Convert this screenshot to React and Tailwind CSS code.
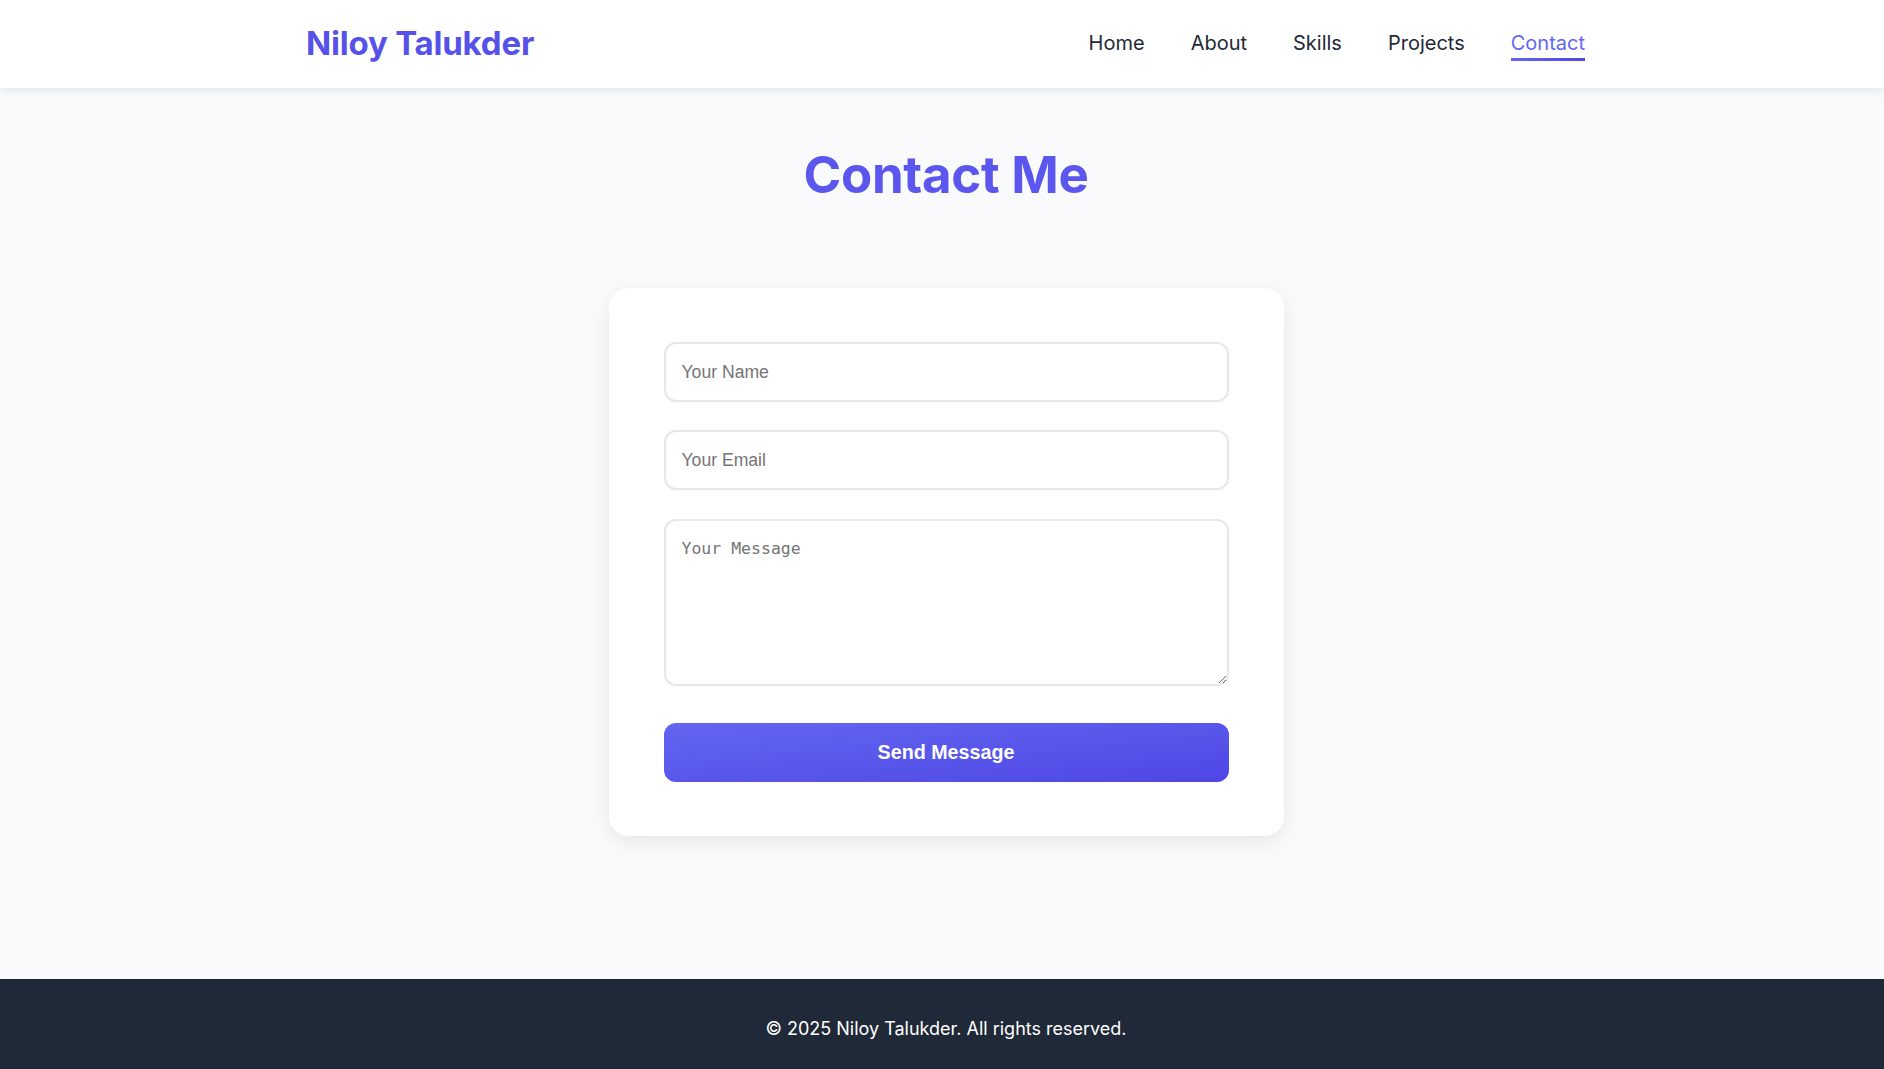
import React, { useState } from 'react';

const links = ['Home', 'About', 'Skills', 'Projects', 'Contact'];

export default function App() {
  const [form, setForm] = useState({ name: '', email: '', message: '' });

  return (
    <div className="min-h-screen flex flex-col bg-gray-50 font-['Inter',sans-serif]">
      <header className="bg-white shadow-[0_2px_10px_rgba(0,0,0,0.1)] pl-2 relative z-10">
        <div className="mx-auto w-[1280px] h-[88px] flex items-center justify-between">
          <a className="text-[33px] font-bold text-[#5651e8] tracking-[-0.2px]">Niloy Talukder</a>
          <nav className="flex items-center gap-[46px] mb-[3px] pr-[1px]">
            {links.map((link) => (
              <a
                key={link}
                className={
                  link === 'Contact'
                    ? 'relative text-xl leading-7 text-[#6366f1]'
                    : 'relative text-xl leading-7 text-[#1f2937]'
                }
              >
                {link}
                {link === 'Contact' && (
                  <span className="absolute left-0 right-0 -bottom-[4px] h-[3px] bg-gradient-to-r from-[#6366f1] to-[#4f46e5]" />
                )}
              </a>
            ))}
          </nav>
        </div>
      </header>

      <main className="flex-1 pl-2 pt-[56px] pb-[143px]">
        <h1 className="text-center text-[51px] leading-[61px] font-bold text-[#5b57ee] tracking-[-0.3px]">
          Contact Me
        </h1>

        <div className="mx-auto mt-[83px] w-[675px] bg-white rounded-[20px] shadow-[0_6px_20px_rgba(0,0,0,0.08)] px-[55px] py-[54px]">
          <form className="flex flex-col" onSubmit={(e) => e.preventDefault()}>
            <input
              type="text"
              placeholder="Your Name"
              value={form.name}
              onChange={(e) => setForm({ ...form, name: e.target.value })}
              className="h-[60px] w-full rounded-xl border-2 border-[#e5e7eb] px-4 text-[17.6px] font-['Liberation_Sans',Arial,sans-serif] text-gray-800 placeholder:text-[#757575] outline-none"
            />
            <input
              type="email"
              placeholder="Your Email"
              value={form.email}
              onChange={(e) => setForm({ ...form, email: e.target.value })}
              className="mt-[28px] h-[60px] w-full rounded-xl border-2 border-[#e5e7eb] px-4 text-[17.6px] font-['Liberation_Sans',Arial,sans-serif] text-gray-800 placeholder:text-[#757575] outline-none"
            />
            <textarea
              placeholder="Your Message"
              value={form.message}
              onChange={(e) => setForm({ ...form, message: e.target.value })}
              className="mt-[29px] h-[167px] w-full rounded-xl border-2 border-[#e5e7eb] px-4 py-4 text-[16.5px] font-['DejaVu_Sans_Mono',monospace] text-gray-800 placeholder:text-[#757575] outline-none resize-y"
            />
            <button
              type="submit"
              className="mt-[37px] h-[59px] w-full rounded-xl bg-gradient-to-br from-[#6366f1] to-[#4f46e5] text-white text-[19.7px] font-bold font-['Liberation_Sans',Arial,sans-serif]"
            >
              Send Message
            </button>
          </form>
        </div>
      </main>

      <footer className="bg-[#1f2937] pl-2 h-[90px] flex items-center justify-center pt-[9px]">
        <p className="text-white text-lg">© 2025 Niloy Talukder. All rights reserved.</p>
      </footer>
    </div>
  );
}
